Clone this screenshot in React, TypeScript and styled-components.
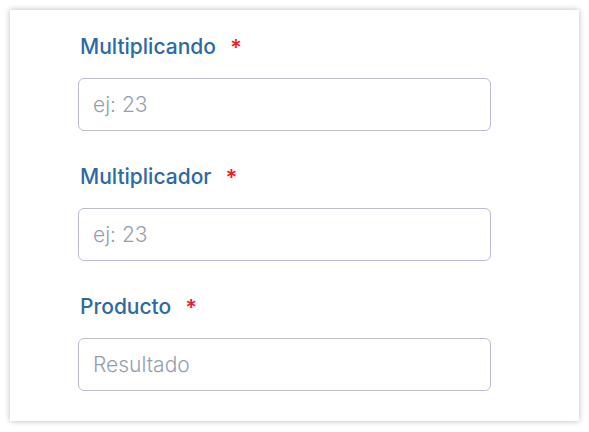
import React from "react";
import styled, { createGlobalStyle } from "styled-components";

const Global = createGlobalStyle`
  html, body { margin: 0; padding: 0; background: #ffffff; }
  body { font-family: Inter, "Noto Sans", sans-serif; }
`;

const Card = styled.div`
  box-sizing: border-box;
  margin: 10px;
  width: 569px;
  height: 411px;
  background: #ffffff;
  box-shadow: 0 0 6px rgba(0, 0, 0, 0.28);
  padding: 25px 0 0 68px;
  display: flex;
  flex-direction: column;
  gap: 34px;
`;

const Field = styled.div`
  display: flex;
  flex-direction: column;
  gap: 19px;
`;

const Label = styled.label`
  display: flex;
  align-items: center;
  margin-left: 2px;
  font-size: 21px;
  line-height: 24px;
  font-weight: 500;
  color: #2d69a3;
`;

const Required = styled.span`
  margin-left: 14px;
  color: #ee1c24;
  font-weight: 600;
  font-size: 22px;
`;

const Input = styled.input`
  box-sizing: border-box;
  width: 413px;
  height: 53px;
  border: 1px solid #b9bccd;
  border-radius: 6px;
  padding: 0 14px;
  font-family: Inter, "Noto Sans", sans-serif;
  font-size: 21px;
  font-weight: 300;
  color: #333;
  outline: none;
  &::placeholder {
    color: #949eb0;
  }
`;

const fields = [
  { label: "Multiplicando", placeholder: "ej: 23" },
  { label: "Multiplicador", placeholder: "ej: 23" },
  { label: "Producto", placeholder: "Resultado" },
];

export default function App() {
  return (
    <>
      <Global />
      <Card>
        {fields.map((f) => (
          <Field key={f.label}>
            <Label>
              {f.label}
              <Required>*</Required>
            </Label>
            <Input placeholder={f.placeholder} />
          </Field>
        ))}
      </Card>
    </>
  );
}
